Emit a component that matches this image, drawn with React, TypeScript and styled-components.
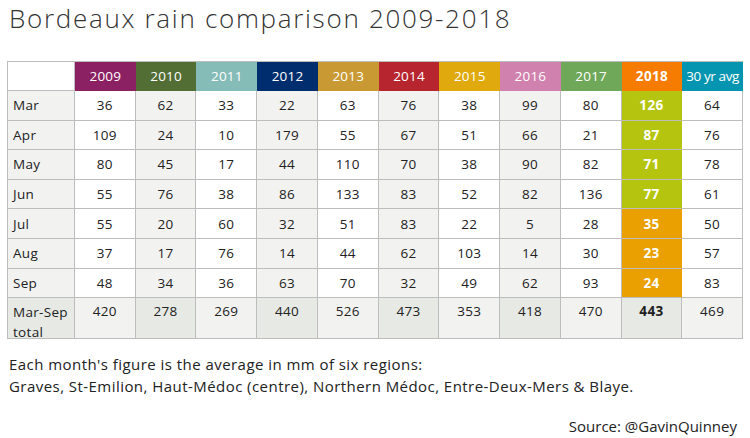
import styled, { createGlobalStyle } from 'styled-components';

const GlobalStyle = createGlobalStyle`
    body {
        margin: 0;
        background: #ffffff;
        font-family: 'Open Sans', 'Noto Sans', sans-serif;
        color: #222;
    }
`;

const Page = styled.div`
    width: 750px;
    height: 438px;
    padding: 3px 7px 0 7px;
    box-sizing: border-box;
    display: flex;
    flex-direction: column;
`;

const Title = styled.h1`
    margin: 0 0 0 2px;
    font-size: 26px;
    font-weight: 300;
    color: #333;
    letter-spacing: 1.7px;
    line-height: 31px;
`;

const Grid = styled.div`
    margin-top: 27px;
    width: 736px;
    display: grid;
    grid-template-columns: 67px repeat(11, 1fr);
    grid-template-rows: 29px repeat(7, 29.6px) 41px;
    border-top: 1px solid #bdbdbd;
    border-left: 1px solid #bdbdbd;
    box-sizing: border-box;
`;

const Cell = styled.div<{ $bg?: string; $total?: boolean }>`
    border-right: 1px solid #bdbdbd;
    border-bottom: 1px solid #bdbdbd;
    background: ${(p) => p.$bg || '#fff'};
    display: flex;
    align-items: ${(p) => (p.$total ? 'flex-start' : 'center')};
    justify-content: center;
    padding-top: ${(p) => (p.$total ? '4px' : '0')};
    font-size: 13.5px;
    letter-spacing: 0.3px;
    color: #222;
    box-sizing: border-box;
`;

const HeadCell = styled.div<{ $bg: string; $bold?: boolean }>`
    background: ${(p) => p.$bg};
    border-bottom: 1px solid ${(p) => p.$bg};
    display: flex;
    align-items: center;
    justify-content: center;
    color: #fff;
    font-size: 13.5px;
    font-weight: ${(p) => (p.$bold ? 700 : 400)};
    white-space: nowrap;
    letter-spacing: ${(p) => (p.$bold ? '0.3px' : '0.2px')};
`;

const AvgHead = styled(HeadCell)`
    letter-spacing: -0.4px;
`;

const Corner = styled.div`
    border-right: 1px solid #bdbdbd;
    border-bottom: 1px solid #bdbdbd;
`;

const MonthCell = styled(Cell)`
    justify-content: flex-start;
    padding-left: 5px;
    line-height: 20px;
`;

const HotCell = styled(Cell)<{ $tone: string }>`
    background: ${(p) => p.$tone};
    border-right-color: ${(p) => p.$tone};
    color: #fff;
    font-weight: 700;
`;

const Note = styled.p`
    margin: 14px 0 0 2px;
    font-size: 15px;
    line-height: 22px;
    letter-spacing: 0.45px;
    color: #222;
`;

const Source = styled.div`
    margin-top: auto;
    margin-bottom: 2px;
    align-self: flex-end;
    font-size: 15px;
    color: #222;
    padding-right: 6px;
`;

const years = [
    { label: '2009', color: '#8b2162' },
    { label: '2010', color: '#536e35' },
    { label: '2011', color: '#85bcb7' },
    { label: '2012', color: '#002d6e' },
    { label: '2013', color: '#c99a33' },
    { label: '2014', color: '#b7262f' },
    { label: '2015', color: '#e0aa0f' },
    { label: '2016', color: '#d181ad' },
    { label: '2017', color: '#6fa858' },
    { label: '2018', color: '#f57c00', bold: true }
];

const rows: [string, number[]][] = [
    ['Mar', [36, 62, 33, 22, 63, 76, 38, 99, 80, 126, 64]],
    ['Apr', [109, 24, 10, 179, 55, 67, 51, 66, 21, 87, 76]],
    ['May', [80, 45, 17, 44, 110, 70, 38, 90, 82, 71, 78]],
    ['Jun', [55, 76, 38, 86, 133, 83, 52, 82, 136, 77, 61]],
    ['Jul', [55, 20, 60, 32, 51, 83, 22, 5, 28, 35, 50]],
    ['Aug', [37, 17, 76, 14, 44, 62, 103, 14, 30, 23, 57]],
    ['Sep', [48, 34, 36, 63, 70, 32, 49, 62, 93, 24, 83]]
];

const totals = [420, 278, 269, 440, 526, 473, 353, 418, 470, 443, 469];

const LIGHT = '#f2f3f1';
const DARK = '#e6e9e4';

export default function App() {
    return (
        <>
            <GlobalStyle />
            <Page>
                <Title>Bordeaux rain comparison 2009-2018</Title>
                <Grid>
                    <Corner />
                    {years.map((y) => (
                        <HeadCell key={y.label} $bg={y.color} $bold={y.bold}>
                            {y.label}
                        </HeadCell>
                    ))}
                    <AvgHead $bg="#0695b0">30 yr avg</AvgHead>
                    {rows.map(([month, values], r) => [
                        <MonthCell key={month} $bg={LIGHT}>
                            {month}
                        </MonthCell>,
                        ...values.map((v, i) =>
                            i === 9 ? (
                                <HotCell
                                    key={month + i}
                                    $tone={r < 4 ? '#b5c40e' : '#e9a000'}
                                >
                                    {v}
                                </HotCell>
                            ) : (
                                <Cell
                                    key={month + i}
                                    $bg={i % 2 === 1 ? LIGHT : '#fff'}
                                >
                                    {v}
                                </Cell>
                            )
                        )
                    ])}
                    <MonthCell $bg={DARK} $total>
                        Mar-Sep
                        <br />
                        total
                    </MonthCell>
                    {totals.map((t, i) => (
                        <Cell
                            key={'t' + i}
                            $total
                            $bg={i % 2 === 1 ? DARK : LIGHT}
                            style={i === 9 ? { fontWeight: 700 } : undefined}
                        >
                            {t}
                        </Cell>
                    ))}
                </Grid>
                <Note>
                    Each month's figure is the average in mm of six regions:
                    <br />
                    Graves, St-Emilion, Haut-Médoc (centre), Northern Médoc,
                    Entre-Deux-Mers &amp; Blaye.
                </Note>
                <Source>Source: @GavinQuinney</Source>
            </Page>
        </>
    );
}
